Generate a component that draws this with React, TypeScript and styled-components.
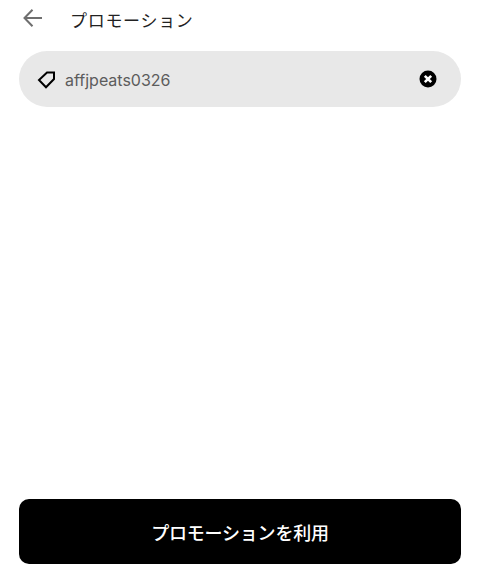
import React from "react";
import styled, { createGlobalStyle } from "styled-components";

const GlobalStyle = createGlobalStyle`
  html, body {
    margin: 0;
    padding: 0;
    background: #ffffff;
  }
`;

const Page = styled.div`
  width: 480px;
  height: 580px;
  box-sizing: border-box;
  display: flex;
  flex-direction: column;
  padding: 0 19px 16px 19px;
  font-family: "Noto Sans CJK JP", "Inter", sans-serif;
  overflow: hidden;
`;

const Header = styled.div`
  height: 38px;
  display: flex;
  align-items: center;
  gap: 26px;
  padding-left: 3px;
`;

const BackButton = styled.div`
  width: 22px;
  height: 22px;
  margin-bottom: 2px;
  display: flex;
  align-items: center;
  justify-content: center;
  color: #6f6f6f;
`;

const Title = styled.div`
  font-size: 17px;
  color: #222222;
  letter-spacing: 0.7px;
`;

const PromoField = styled.div`
  margin-top: 13px;
  height: 56px;
  border-radius: 28px;
  background: #e8e8e8;
  display: flex;
  align-items: center;
  padding: 0 24px 0 18px;
`;

const TagWrap = styled.div`
  width: 19px;
  height: 19px;
  margin-right: 9px;
`;

const PromoText = styled.div`
  flex: 1;
  padding-top: 2px;
  font-family: "Inter", sans-serif;
  font-size: 16px;
  color: #5c5c5c;
`;

const Spacer = styled.div`
  flex: 1;
`;

const SubmitButton = styled.button`
  height: 65px;
  border: none;
  border-radius: 10px;
  background: #000000;
  color: #ffffff;
  font-family: inherit;
  font-size: 18px;
  font-weight: 500;
  letter-spacing: -0.2px;
`;

function BackIcon() {
  return (
    <svg width="22" height="22" viewBox="0 0 22 22" fill="none">
      <path d="M20 11H3.5M10.5 2.8 2.5 11l8 8.2" stroke="currentColor" strokeWidth="2" />
    </svg>
  );
}

function TagIcon() {
  return (
    <svg width="19" height="19" viewBox="0 0 19 19" fill="none">
      <path d="M10 2.5h7V9l-8 8.2L2 10z" stroke="#000" strokeWidth="2" strokeLinejoin="miter" />
    </svg>
  );
}

function ClearIcon() {
  return (
    <svg width="18" height="18" viewBox="0 0 18 18">
      <circle cx="9" cy="9" r="8.5" fill="#000" />
      <path d="M5.8 5.8l6.4 6.4M12.2 5.8l-6.4 6.4" stroke="#fff" strokeWidth="2.6" />
    </svg>
  );
}

export default function App() {
  return (
    <>
      <GlobalStyle />
      <Page>
        <Header>
          <BackButton>
            <BackIcon />
          </BackButton>
          <Title>プロモーション</Title>
        </Header>
        <PromoField>
          <TagWrap>
            <TagIcon />
          </TagWrap>
          <PromoText>affjpeats0326</PromoText>
          <ClearIcon />
        </PromoField>
        <Spacer />
        <SubmitButton>プロモーションを利用</SubmitButton>
      </Page>
    </>
  );
}
